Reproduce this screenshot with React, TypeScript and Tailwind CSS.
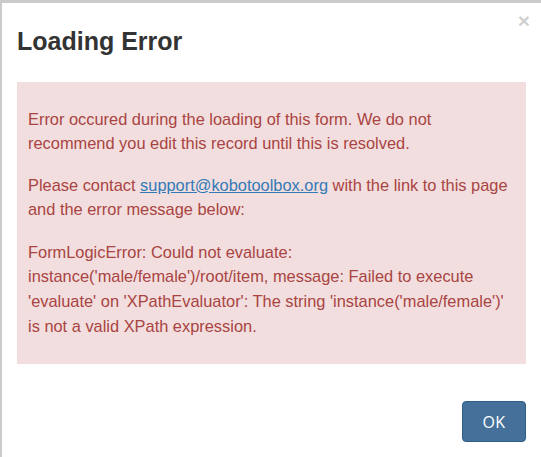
export default function App() {
  return (
    <div className="h-[457px] w-[541px] overflow-hidden bg-[#cbcbcb] pl-[2px] pt-[3px] font-['Liberation_Sans',Arial,sans-serif]">
      <div className="relative flex h-full flex-col bg-white px-[15px]">
        <button className="absolute right-[11px] top-[7px] text-[21px] font-bold leading-none text-black/20">
          ×
        </button>
        <h4 className="mt-[25px] text-[25px] font-bold leading-[1.1] text-[#333333]">
          Loading Error
        </h4>
        <div className="mt-[26px] bg-[#f2dede] pl-[11px] pr-[8px] pb-[26px] pt-[25px] text-[16.4px] leading-[24.6px] text-[#a94442]">
          <p>
            Error occured during the loading of this form. We do not
            recommend you edit this record until this is resolved.
          </p>
          <p className="mt-[17px]">
            Please contact{" "}
            <a className="text-[#337ab7] underline" href="#">
              support@kobotoolbox.org
            </a>{" "}
            with the link to this page and the error message below:
          </p>
          <p className="mt-[18px]">
            FormLogicError: Could not evaluate:
            instance('male/female')/root/item, message: Failed to execute
            'evaluate' on 'XPathEvaluator': The string
            'instance('male/female')' is not a valid XPath expression.
          </p>
        </div>
        <div className="mt-[37px] flex justify-end">
          <button className="h-[41px] w-[64px] rounded-[4px] border border-[#2f5f88] bg-[#45709a] font-['Open_Sans',sans-serif] text-[16px] tracking-wide text-white">
            OK
          </button>
        </div>
      </div>
    </div>
  );
}
